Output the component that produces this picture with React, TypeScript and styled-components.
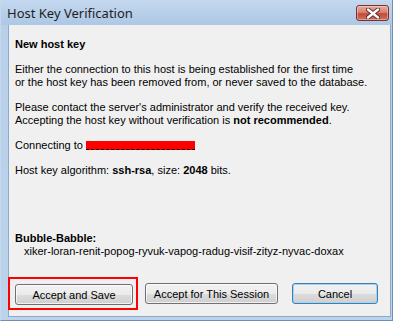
import styled, { createGlobalStyle } from 'styled-components';

const GlobalStyle = createGlobalStyle`
  html, body {
    margin: 0;
    padding: 0;
    background: #ffffff;
  }
`;

const BUBBLE =
  'xiker-loran-renit-popog-ryvuk-vapog-radug-visif-zityz-nyvac-doxax';

function App() {
  return (
    <>
      <GlobalStyle />
      <Window>
        <TitleBar>
          <Title>Host Key Verification</Title>
          <CloseButton aria-label="Close">
            <svg width="14" height="11" viewBox="0 0 14 11">
              <path
                d="M2 1.5 L12 9.5 M12 1.5 L2 9.5"
                stroke="#5a2a24"
                strokeWidth="4.2"
                strokeLinecap="round"
              />
              <path
                d="M2 1.5 L12 9.5 M12 1.5 L2 9.5"
                stroke="#ffffff"
                strokeWidth="2.4"
                strokeLinecap="round"
              />
            </svg>
          </CloseButton>
        </TitleBar>
        <Body>
          <Heading>New host key</Heading>
          <Paragraph>
            Either the connection to this host is being established for the first time
            <br />
            or the host key has been removed from, or never saved to the database.
          </Paragraph>
          <Paragraph>
            Please contact the server's administrator and verify the received key.
            <br />
            Accepting the host key without verification is <b>not recommended</b>.
          </Paragraph>
          <Paragraph>
            Connecting to <Redacted />
          </Paragraph>
          <Paragraph>
            Host key algorithm: <b>ssh-rsa</b>, size: <b>2048</b> bits.
          </Paragraph>
          <Fingerprint>
            <Heading>Bubble-Babble:</Heading>
            <Indented>{BUBBLE}</Indented>
          </Fingerprint>
          <ButtonRow>
            <Highlight>
              <DialogButton $width={118}>Accept and Save</DialogButton>
            </Highlight>
            <DialogButton $width={133}>Accept for This Session</DialogButton>
            <DialogButton $width={86} $default>
              Cancel
            </DialogButton>
          </ButtonRow>
        </Body>
      </Window>
    </>
  );
}

export default App;

const Window = styled.div`
  width: 391px;
  height: 320px;
  display: flex;
  flex-direction: column;
  background: linear-gradient(#b9d0ea, #bcd3ec);
  border-right: 1px solid #6f8fb3;
  border-bottom: 1px solid #6f8fb3;
  border-left: 1px solid #c5d8ee;
`;

const TitleBar = styled.div`
  height: 25px;
  display: flex;
  align-items: flex-start;
  justify-content: space-between;
  background: linear-gradient(#c4d8ef, #adc7e5);
`;

const Title = styled.span`
  margin: 5px 0 0 6px;
  font-family: 'Noto Sans', 'Open Sans', sans-serif;
  font-size: 13px;
  line-height: 16px;
  color: #1e1e1e;
`;

const CloseButton = styled.button`
  margin: 5px 3px 0 0;
  width: 33px;
  height: 16px;
  padding: 0;
  display: flex;
  align-items: center;
  justify-content: center;
  border: 1px solid #7b3129;
  border-radius: 3px;
  background: linear-gradient(#e9a99c 0%, #d98272 45%, #c24c38 55%, #d0705c 100%);
  box-shadow: inset 0 0 0 1px rgba(255, 255, 255, 0.35);
`;

const Body = styled.div`
  flex: 1;
  margin: 0 1px 3px 7px;
  padding: 13px 0 0 6px;
  display: flex;
  flex-direction: column;
  gap: 12px;
  background: #f0f0f0;
  border: 1px solid #8fa9c8;
  border-top: none;
  font-family: 'Liberation Sans', Arial, sans-serif;
  font-size: 11px;
  line-height: 13px;
  color: #000000;
`;

const Heading = styled.div`
  font-weight: bold;
`;

const Paragraph = styled.div`
  b {
    font-weight: bold;
  }
`;

const Redacted = styled.span`
  display: inline-block;
  width: 109px;
  height: 8px;
  vertical-align: -1px;
  background: #ff0000;
  border-bottom: 1px dashed #000000;
`;

const Fingerprint = styled.div`
  margin-top: 43px;
`;

const Indented = styled.div`
  padding-left: 9px;
`;

const ButtonRow = styled.div`
  margin-top: 7px;
  display: flex;
  align-items: center;
  gap: 7px;
`;

const Highlight = styled.div`
  margin-left: -7px;
  padding: 5px 3px 3px 5px;
  border: 2px solid #ff0000;
  display: flex;
`;

const DialogButton = styled.button<{ $width: number; $default?: boolean }>`
  width: ${({ $width }) => $width}px;
  height: 21px;
  padding: 0;
  font-family: 'Liberation Sans', Arial, sans-serif;
  font-size: 11px;
  color: #000000;
  border: 1px solid ${({ $default }) => ($default ? '#3c7fb1' : '#707070')};
  border-radius: 3px;
  background: linear-gradient(#f2f2f2 0%, #ebebeb 50%, #dddddd 51%, #cfcfcf 100%);
  box-shadow: inset 0 0 0 1px
    ${({ $default }) => ($default ? '#a4d4f2' : 'rgba(255, 255, 255, 0.7)')};
  & + & {
    margin-left: 7px;
  }
`;
